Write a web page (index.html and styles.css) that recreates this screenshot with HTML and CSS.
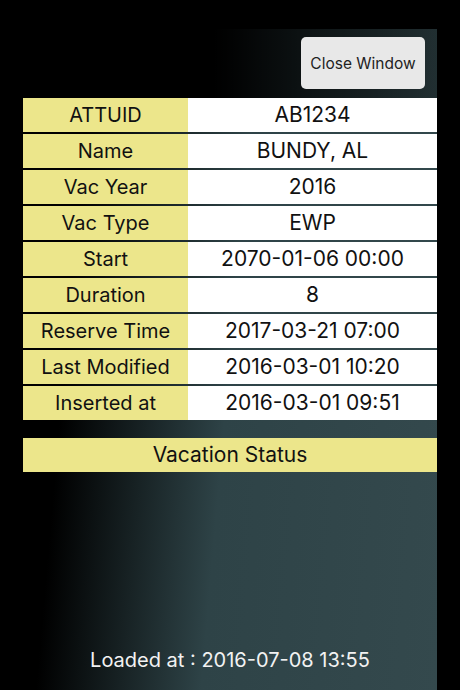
FILE: index.html
```html
<!DOCTYPE html>
<html lang="en">
<head>
<meta charset="UTF-8">
<meta name="viewport" content="width=device-width, initial-scale=1.0">
<title>Vacation Details</title>
<link rel="stylesheet" href="styles.css">
</head>
<body>
<div class="panel">
<div class="toolbar">
<button class="close-btn" type="button">Close Window</button>
</div>

<div class="details">
<div class="label">ATTUID</div><div class="value">AB1234</div>
<div class="label">Name</div><div class="value">BUNDY, AL</div>
<div class="label">Vac Year</div><div class="value">2016</div>
<div class="label">Vac Type</div><div class="value">EWP</div>
<div class="label">Start</div><div class="value">2070-01-06 00:00</div>
<div class="label">Duration</div><div class="value">8</div>
<div class="label">Reserve Time</div><div class="value">2017-03-21 07:00</div>
<div class="label">Last Modified</div><div class="value">2016-03-01 10:20</div>
<div class="label">Inserted at</div><div class="value">2016-03-01 09:51</div>
</div>

<div class="status-bar">Vacation Status</div>

<div class="status-list"></div>

<p class="loaded">Loaded at : 2016-07-08 13:55</p>
</div>
</body>
</html>
```

FILE: styles.css
```css
html, body {
height: 100%;
}

body {
margin: 0;
padding: 0;
background-color: #000;
font-family: Inter, "Noto Sans", sans-serif;
color: #111;
}

.panel {
box-sizing: border-box;
margin: 0 23px;
height: 100%;
display: flex;
flex-direction: column;
border-top: 29px solid #000;
background-color: #000;
background-image: linear-gradient(95deg, #000 15%, #2e4347 50%, #34494d 100%);
}

.panel > * {
flex-shrink: 0;
}

.toolbar {
display: flex;
justify-content: flex-end;
padding: 8px 12px 9px 0;
background-image: linear-gradient(to right, #000 46%, rgba(0, 0, 0, 0.35) 100%);
}

.close-btn {
width: 124px;
height: 52px;
border: none;
border-radius: 5px;
background-color: #e8e8e8;
color: #222;
font-family: Inter, "Noto Sans", sans-serif;
font-size: 15.5px;
padding: 0;
}

.details {
display: grid;
grid-template-columns: 165px 1fr;
row-gap: 2px;
}

.label, .value {
height: 34px;
line-height: 34px;
text-align: center;
font-size: 20px;
}

.label {
background-color: #ece68b;
}

.value {
background-color: #fff;
font-size: 21px;
}

.status-bar {
margin-top: 18px;
height: 34px;
line-height: 34px;
text-align: center;
font-size: 21px;
background-color: #ece68b;
}

.status-list {
flex: 1 0 auto;
}

.loaded {
margin: 0;
padding-bottom: 18px;
line-height: 24px;
text-align: center;
font-size: 20px;
color: #f2f2f2;
}
```
